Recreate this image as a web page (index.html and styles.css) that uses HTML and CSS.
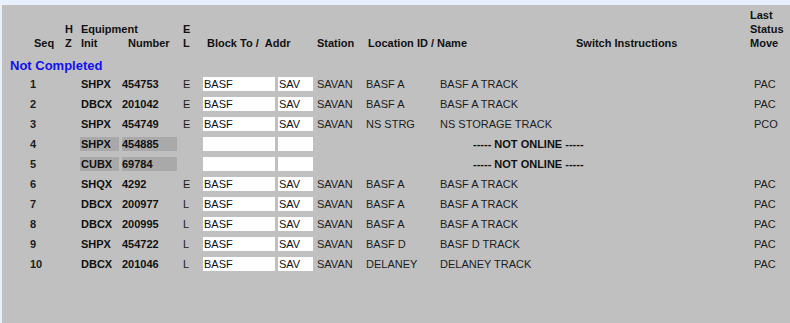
FILE: index.html
```html
<!DOCTYPE html>
<html>
<head>
  <meta name="viewport" content="width=device-width, initial-scale=1.0">
  <link rel="stylesheet" href="styles.css">
</head>
<body>
  <div class="panel">
    <div class="grid head">
      <div class="c-seq">Seq</div>
      <div class="c-hz">H<br>Z</div>
      <div class="c-equip">Equipment<br><span class="init">Init</span><span class="num">Number</span></div>
      <div class="c-el">E<br>L</div>
      <div class="c-block">Block To /&nbsp;&nbsp;Addr</div>
      <div class="c-station">Station</div>
      <div class="c-loc">Location ID / Name</div>
      <div class="c-switch">Switch Instructions</div>
      <div class="c-last">Last<br>Status<br>Move</div>
    </div>

    <div class="section">Not Completed</div>

    <div class="grid row">
      <div class="seq">1</div><div></div>
      <div class="init">SHPX</div><div class="num">454753</div><div>E</div>
      <div><input class="fld" value="BASF"></div><div><input class="fld addr" value="SAV"></div>
      <div>SAVAN</div><div>BASF A</div><div class="name">BASF A TRACK</div><div class="last">PAC</div>
    </div>
    <div class="grid row">
      <div class="seq">2</div><div></div>
      <div class="init">DBCX</div><div class="num">201042</div><div>E</div>
      <div><input class="fld" value="BASF"></div><div><input class="fld addr" value="SAV"></div>
      <div>SAVAN</div><div>BASF A</div><div class="name">BASF A TRACK</div><div class="last">PAC</div>
    </div>
    <div class="grid row">
      <div class="seq">3</div><div></div>
      <div class="init">SHPX</div><div class="num">454749</div><div>E</div>
      <div><input class="fld" value="BASF"></div><div><input class="fld addr" value="SAV"></div>
      <div>SAVAN</div><div>NS STRG</div><div class="name">NS STORAGE TRACK</div><div class="last">PCO</div>
    </div>
    <div class="grid row">
      <div class="seq">4</div><div></div>
      <div class="init"><span class="off off-init">SHPX</span></div><div class="num"><span class="off off-num">454885</span></div><div></div>
      <div><input class="fld" value=""></div><div><input class="fld addr" value=""></div>
      <div class="offline">----- NOT ONLINE -----</div>
    </div>
    <div class="grid row">
      <div class="seq">5</div><div></div>
      <div class="init"><span class="off off-init">CUBX</span></div><div class="num"><span class="off off-num">69784</span></div><div></div>
      <div><input class="fld" value=""></div><div><input class="fld addr" value=""></div>
      <div class="offline">----- NOT ONLINE -----</div>
    </div>
    <div class="grid row">
      <div class="seq">6</div><div></div>
      <div class="init">SHQX</div><div class="num">4292</div><div>E</div>
      <div><input class="fld" value="BASF"></div><div><input class="fld addr" value="SAV"></div>
      <div>SAVAN</div><div>BASF A</div><div class="name">BASF A TRACK</div><div class="last">PAC</div>
    </div>
    <div class="grid row">
      <div class="seq">7</div><div></div>
      <div class="init">DBCX</div><div class="num">200977</div><div>L</div>
      <div><input class="fld" value="BASF"></div><div><input class="fld addr" value="SAV"></div>
      <div>SAVAN</div><div>BASF A</div><div class="name">BASF A TRACK</div><div class="last">PAC</div>
    </div>
    <div class="grid row">
      <div class="seq">8</div><div></div>
      <div class="init">DBCX</div><div class="num">200995</div><div>L</div>
      <div><input class="fld" value="BASF"></div><div><input class="fld addr" value="SAV"></div>
      <div>SAVAN</div><div>BASF A</div><div class="name">BASF A TRACK</div><div class="last">PAC</div>
    </div>
    <div class="grid row">
      <div class="seq">9</div><div></div>
      <div class="init">SHPX</div><div class="num">454722</div><div>L</div>
      <div><input class="fld" value="BASF"></div><div><input class="fld addr" value="SAV"></div>
      <div>SAVAN</div><div>BASF D</div><div class="name">BASF D TRACK</div><div class="last">PAC</div>
    </div>
    <div class="grid row">
      <div class="seq">10</div><div></div>
      <div class="init">DBCX</div><div class="num">201046</div><div>L</div>
      <div><input class="fld" value="BASF"></div><div><input class="fld addr" value="SAV"></div>
      <div>SAVAN</div><div>DELANEY</div><div class="name">DELANEY TRACK</div><div class="last">PAC</div>
    </div>
  </div>
</body>
</html>
```

FILE: styles.css
```css
* {
  margin: 0;
  padding: 0;
  box-sizing: border-box;
}

body {
  width: 790px;
  height: 323px;
  overflow: hidden;
  background: #e8f0fe;
  font-family: "Liberation Sans", Arial, sans-serif;
  font-size: 11px;
  color: #1c1c1c;
  padding: 5px 0 0 2px;
}

.panel {
  background: #c0c0c0;
  height: 318px;
  padding-top: 3px;
}

/* column tracks shared by header and data rows */
.grid {
  display: grid;
  grid-template-columns: 28px 35px 15px 42px 61px 20px 75px 39px 49px 74px 136px 174px 40px;
}

/* Header */
.head {
  font-weight: bold;
  color: #111;
  line-height: 14px;
  height: 42px;
  align-items: end;
}

.head .c-seq { grid-column: 2; padding-left: 4px; }
.head .c-hz { grid-column: 3; }
.head .c-equip { grid-column: 4 / span 2; padding-left: 1px; }
.head .c-equip .init { display: inline-block; width: 47px; }
.head .c-el { grid-column: 6; }
.head .c-block { grid-column: 7 / span 2; padding-left: 4px; }
.head .c-station { grid-column: 9; }
.head .c-loc { grid-column: 10 / span 2; padding-left: 2px; }
.head .c-switch { grid-column: 12; }
.head .c-last { grid-column: 13; }

.section {
  color: #1010ee;
  font-weight: bold;
  font-size: 13px;
  line-height: 16px;
  padding: 8px 0 0 8px;
}

/* Data rows */
.row {
  height: 20px;
  line-height: 20px;
  align-items: center;
}

.row > div {
  white-space: nowrap;
}

.row .seq {
  grid-column: 2;
  font-weight: bold;
}

.row .init,
.row .num {
  font-weight: bold;
  color: #111;
}

.row .init { padding-left: 1px; }

.row .name { grid-column: span 2; }

.row .last { padding-left: 4px; }

.off {
  display: block;
  background: #a9a9a9;
  height: 14px;
  line-height: 14px;
}

.off-init { width: 39px; margin-left: -1px; padding-left: 1px; }
.off-num { width: 55px; }

.fld {
  display: block;
  border: 0;
  outline: 0;
  background: #fff;
  height: 14px;
  width: 72px;
  padding: 0 1px;
  font-family: inherit;
  font-size: 11px;
  color: #111;
}

.fld.addr {
  width: 35px;
}

.offline {
  grid-column: 9 / span 4;
  font-weight: bold;
  color: #111;
  padding-left: 156px;
}
```
